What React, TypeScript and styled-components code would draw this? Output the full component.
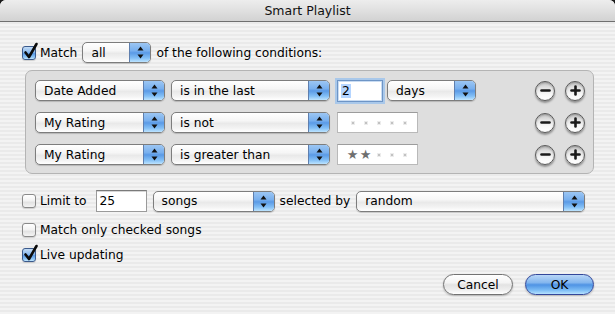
import React from 'react';
import styled, { createGlobalStyle } from 'styled-components';

const GlobalStyle = createGlobalStyle`
  html, body {
    margin: 0;
    padding: 0;
    background: #1a1a1a;
  }
  body {
    font-family: "DejaVu Sans", Verdana, sans-serif;
    font-size: 12.25px;
    color: #000;
  }
`;

const Window = styled.div`
  width: 615px;
  height: 314px;
  display: flex;
  flex-direction: column;
  border-radius: 6px 6px 0 0;
  overflow: hidden;
  background: repeating-linear-gradient(
    to bottom,
    #f3f3f3 0,
    #f3f3f3 2px,
    #eaeaea 2px,
    #eaeaea 4px
  );
`;

const TitleBar = styled.div`
  height: 21px;
  border-bottom: 1px solid #6f6f6f;
  background: linear-gradient(to bottom, #ededed 0%, #e0e0e0 50%, #d2d2d2 100%);
  display: flex;
  align-items: center;
  justify-content: center;
  font-size: 12.5px;
  color: #111;
`;

const Content = styled.div`
  display: flex;
  flex-direction: column;
  padding: 0 21px 0 22px;
`;

const Row = styled.div<{ $h: number; $mt: number }>`
  display: flex;
  align-items: center;
  height: ${p => p.$h}px;
  margin-top: ${p => p.$mt}px;
`;

const Label = styled.span<{ $ml?: number; $mr?: number }>`
  margin-left: ${p => p.$ml ?? 0}px;
  margin-right: ${p => p.$mr ?? 0}px;
  white-space: nowrap;
`;

const CheckBoxFrame = styled.span<{ $checked: boolean }>`
  position: relative;
  width: 14px;
  height: 14px;
  box-sizing: border-box;
  border-radius: 3px;
  border: 1px solid ${p => (p.$checked ? '#3b5a8c' : '#8a8a8a')};
  background: ${p =>
    p.$checked
      ? 'linear-gradient(to bottom, #c3dcf6 0%, #88b8ee 45%, #5a9be6 55%, #8fc6f6 85%, #c4e8ff 100%)'
      : 'linear-gradient(to bottom, #ffffff 0%, #f2f2f2 50%, #e2e2e2 60%, #f4f4f4 100%)'};
  box-shadow: 0 1px 1px rgba(0, 0, 0, 0.15);
  flex-shrink: 0;
  margin-right: 4px;
`;

const CheckMark = styled.svg`
  position: absolute;
  left: 1px;
  top: -4px;
  overflow: visible;
`;

function CheckBox({ checked }: { checked: boolean }) {
  return (
    <CheckBoxFrame $checked={checked}>
      {checked && (
        <CheckMark width="14" height="16" viewBox="0 0 14 16">
          <path d="M1.5 9.5 L5 14 L12.5 1" fill="none" stroke="#0b0b0b" strokeWidth="2.6" strokeLinecap="round" strokeLinejoin="round" />
        </CheckMark>
      )}
    </CheckBoxFrame>
  );
}

const PopupFrame = styled.div<{ $w: number }>`
  width: ${p => p.$w}px;
  height: 21px;
  box-sizing: border-box;
  display: flex;
  border: 1px solid #7d7d7d;
  border-radius: 5px;
  overflow: hidden;
  flex-shrink: 0;
  box-shadow: 0 1px 1px rgba(0, 0, 0, 0.18);
  background: linear-gradient(to bottom, #ffffff 0%, #f6f6f6 40%, #e9e9e9 55%, #f3f3f3 80%, #ffffff 100%);
`;

const PopupText = styled.span`
  flex: 1;
  padding-left: 8px;
  display: flex;
  align-items: center;
  white-space: nowrap;
`;

const PopupArrow = styled.span`
  width: 20px;
  display: flex;
  align-items: center;
  justify-content: center;
  border-left: 1px solid #5f7fae;
  background: linear-gradient(to bottom, #9cc6f3 0%, #79b0ee 40%, #5a9ae6 52%, #84c0f6 80%, #bde4ff 100%);
`;

function Popup({ w, label }: { w: number; label: string }) {
  return (
    <PopupFrame $w={w}>
      <PopupText>{label}</PopupText>
      <PopupArrow>
        <svg width="7" height="13" viewBox="0 0 7 13">
          <polygon points="3.5,0.5 6.5,4.5 0.5,4.5" fill="#111" />
          <polygon points="0.5,8.5 6.5,8.5 3.5,12.5" fill="#111" />
        </svg>
      </PopupArrow>
    </PopupFrame>
  );
}

const TextField = styled.div<{ $w: number; $focused?: boolean }>`
  width: ${p => p.$w}px;
  height: 22px;
  box-sizing: border-box;
  flex-shrink: 0;
  background: #fff;
  border: 1px solid ${p => (p.$focused ? '#6e95c6' : '#9a9a9a')};
  border-top-color: ${p => (p.$focused ? '#6e95c6' : '#7a7a7a')};
  box-shadow: ${p => (p.$focused ? '0 0 0 2px #a9c8ea, inset 0 0 0 1px #c9dcf2' : 'inset 0 1px 0 #d6d6d6')};
  padding-left: 3px;
  display: flex;
  align-items: center;
`;

const Selected = styled.span`
  background: #b5d5ff;
  padding: 0 1px;
`;

const RatingField = styled.div`
  width: 81px;
  height: 21px;
  box-sizing: border-box;
  flex-shrink: 0;
  background: #fff;
  border: 1px solid #b9b9b9;
  border-top-color: #9c9c9c;
  display: flex;
  align-items: center;
  padding-left: 8px;
`;

const Slot = styled.span`
  width: 13px;
  height: 13px;
  display: flex;
  align-items: center;
  justify-content: center;
  font-size: 13px;
  line-height: 13px;
  color: #6f6f6f;
`;

const Dot = styled.span`
  width: 2px;
  height: 2px;
  background: #c2c2c2;
  box-shadow: 0 0 0 1px #ececec;
`;

function Rating({ stars }: { stars: number }) {
  return (
    <RatingField>
      {[0, 1, 2, 3, 4].map(i => (
        <Slot key={i}>{i < stars ? '★' : <Dot />}</Slot>
      ))}
    </RatingField>
  );
}

const ConditionBox = styled.div`
  margin: 7px 0 0 3px;
  width: 569px;
  height: 104px;
  box-sizing: border-box;
  border: 1px solid #b4b4b4;
  border-radius: 7px;
  background: #dedede;
  padding: 9px 8px 0 9px;
  display: flex;
  flex-direction: column;
  gap: 11px;
`;

const ConditionRow = styled.div`
  display: flex;
  align-items: center;
  height: 21px;
`;

const Spacer = styled.span<{ $w: number }>`
  width: ${p => p.$w}px;
  flex-shrink: 0;
`;

const RoundGroup = styled.div`
  margin-left: auto;
  display: flex;
  gap: 10px;
`;

const RoundButton = styled.div`
  width: 20px;
  height: 20px;
  box-sizing: border-box;
  border-radius: 50%;
  border: 1.5px solid #5a5a5a;
  background: linear-gradient(to bottom, #c4c4c4 0%, #e4e4e4 35%, #f8f8f8 70%, #ffffff 100%);
  box-shadow: 0 2px 2px rgba(0, 0, 0, 0.35), inset 0 1px 2px rgba(0, 0, 0, 0.25);
  display: flex;
  align-items: center;
  justify-content: center;
`;

function Round({ plus }: { plus?: boolean }) {
  return (
    <RoundButton>
      <svg width="11" height="11" viewBox="0 0 11 11">
        <line x1="1.5" y1="5.5" x2="9.5" y2="5.5" stroke="#1a1a1a" strokeWidth="2.6" strokeLinecap="round" />
        {plus && <line x1="5.5" y1="1.5" x2="5.5" y2="9.5" stroke="#1a1a1a" strokeWidth="2.6" strokeLinecap="round" />}
      </svg>
    </RoundButton>
  );
}

const ButtonRow = styled.div`
  display: flex;
  justify-content: flex-end;
  gap: 12px;
  margin-top: 10px;
`;

const PushButton = styled.div<{ $w: number; $default?: boolean }>`
  width: ${p => p.$w}px;
  height: 21px;
  box-sizing: border-box;
  border-radius: 11px;
  border: 1px solid ${p => (p.$default ? '#33479a' : '#727272')};
  background: ${p =>
    p.$default
      ? 'linear-gradient(to bottom, #b8d6f7 0%, #84b6ee 40%, #4f93e4 52%, #7dbdf5 80%, #b6e2ff 100%)'
      : 'linear-gradient(to bottom, #ffffff 0%, #f4f4f4 40%, #e3e3e3 52%, #f0f0f0 80%, #ffffff 100%)'};
  box-shadow: 0 1px 2px rgba(0, 0, 0, 0.25);
  display: flex;
  align-items: center;
  justify-content: center;
`;

export default function App() {
  return (
    <>
      <GlobalStyle />
      <Window>
        <TitleBar>Smart Playlist</TitleBar>
        <Content>
          <Row $h={21} $mt={20}>
            <CheckBox checked />
            <Label $mr={5}>Match</Label>
            <Popup w={69} label="all" />
            <Label $ml={5}>of the following conditions:</Label>
          </Row>

          <ConditionBox>
            <ConditionRow>
              <Popup w={130} label="Date Added" />
              <Spacer $w={6} />
              <Popup w={159} label="is in the last" />
              <Spacer $w={7} />
              <TextField $w={46} $focused>
                <Selected>2</Selected>
              </TextField>
              <Spacer $w={4} />
              <Popup w={89} label="days" />
              <RoundGroup>
                <Round />
                <Round plus />
              </RoundGroup>
            </ConditionRow>
            <ConditionRow>
              <Popup w={130} label="My Rating" />
              <Spacer $w={6} />
              <Popup w={159} label="is not" />
              <Spacer $w={7} />
              <Rating stars={0} />
              <RoundGroup>
                <Round />
                <Round plus />
              </RoundGroup>
            </ConditionRow>
            <ConditionRow>
              <Popup w={130} label="My Rating" />
              <Spacer $w={6} />
              <Popup w={159} label="is greater than" />
              <Spacer $w={7} />
              <Rating stars={2} />
              <RoundGroup>
                <Round />
                <Round plus />
              </RoundGroup>
            </ConditionRow>
          </ConditionBox>

          <Row $h={22} $mt={16}>
            <CheckBox checked={false} />
            <Label $mr={9}>Limit to</Label>
            <TextField $w={51}>25</TextField>
            <Spacer $w={6} />
            <Popup w={122} label="songs" />
            <Label $ml={5} $mr={6}>selected by</Label>
            <Popup w={229} label="random" />
          </Row>

          <Row $h={18} $mt={9}>
            <CheckBox checked={false} />
            <Label>Match only checked songs</Label>
          </Row>

          <Row $h={18} $mt={7}>
            <CheckBox checked />
            <Label>Live updating</Label>
          </Row>

          <ButtonRow>
            <PushButton $w={70}>Cancel</PushButton>
            <PushButton $w={69} $default>OK</PushButton>
          </ButtonRow>
        </Content>
      </Window>
    </>
  );
}
